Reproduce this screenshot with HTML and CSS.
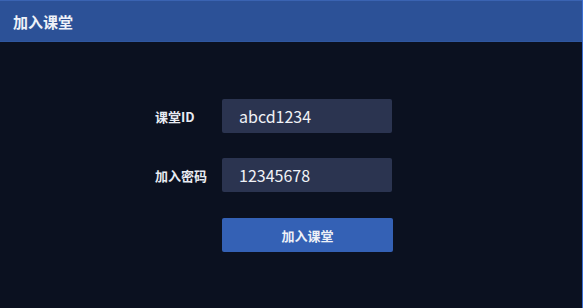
FILE: index.html
```html
<!DOCTYPE html>
<html lang="zh-CN">
<head>
<meta charset="utf-8">
<title>加入课堂</title>
<link rel="stylesheet" href="styles.css">
</head>
<body>
<div class="dialog">
  <div class="header">加入课堂</div>
  <div class="content">
    <form class="form">
      <div class="row">
        <label class="label">课堂ID</label>
        <input class="field" type="text" value="abcd1234">
      </div>
      <div class="row">
        <label class="label">加入密码</label>
        <input class="field" type="text" value="12345678">
      </div>
      <div class="row row-action">
        <span class="label"></span>
        <button class="btn" type="button">加入课堂</button>
      </div>
    </form>
  </div>
</div>
</body>
</html>
```
FILE: styles.css
```css
* { box-sizing: border-box; }
html, body {
  margin: 0;
  padding: 0;
  background: #0b1120;
}
body {
  font-family: "Noto Sans CJK SC", "Noto Sans", sans-serif;
  width: 583px;
  height: 308px;
  overflow: hidden;
}
.dialog {
  width: 583px;
  height: 308px;
  background: #0b1120;
  border-right: 1px solid #3b6fd2;
  display: flex;
  flex-direction: column;
}
.header {
  height: 42px;
  background: #2c5197;
  border-top: 1px solid #3a63b2;
  border-bottom: 1px solid #2f579f;
  color: #eef1f8;
  font-size: 15px;
  font-weight: 700;
  padding-left: 13px;
  display: flex;
  align-items: center;
  flex-shrink: 0;
}
.content {
  flex: 1;
  padding-top: 57px;
  padding-left: 155px;
}
.form {
  display: flex;
  flex-direction: column;
  gap: 25px;
  margin: 0;
}
.row {
  display: flex;
  align-items: center;
  height: 34px;
}
.row-action {
  margin-top: 1px;
}
.label {
  width: 67px;
  color: #e8ebf2;
  font-size: 13px;
  font-weight: 700;
}
.field {
  width: 170px;
  height: 34px;
  border: none;
  outline: none;
  border-radius: 2px;
  background: #2b3450;
  color: #f0f2f7;
  font-family: "Noto Sans CJK SC", "Noto Sans", sans-serif;
  font-size: 16px;
  padding: 0 0 0 17px;
}
.btn {
  width: 171px;
  height: 34px;
  border: none;
  border-radius: 2px;
  background: #3461b5;
  color: #eef1f8;
  font-family: "Noto Sans CJK SC", "Noto Sans", sans-serif;
  font-size: 13px;
  font-weight: 700;
  padding: 0;
}
```
